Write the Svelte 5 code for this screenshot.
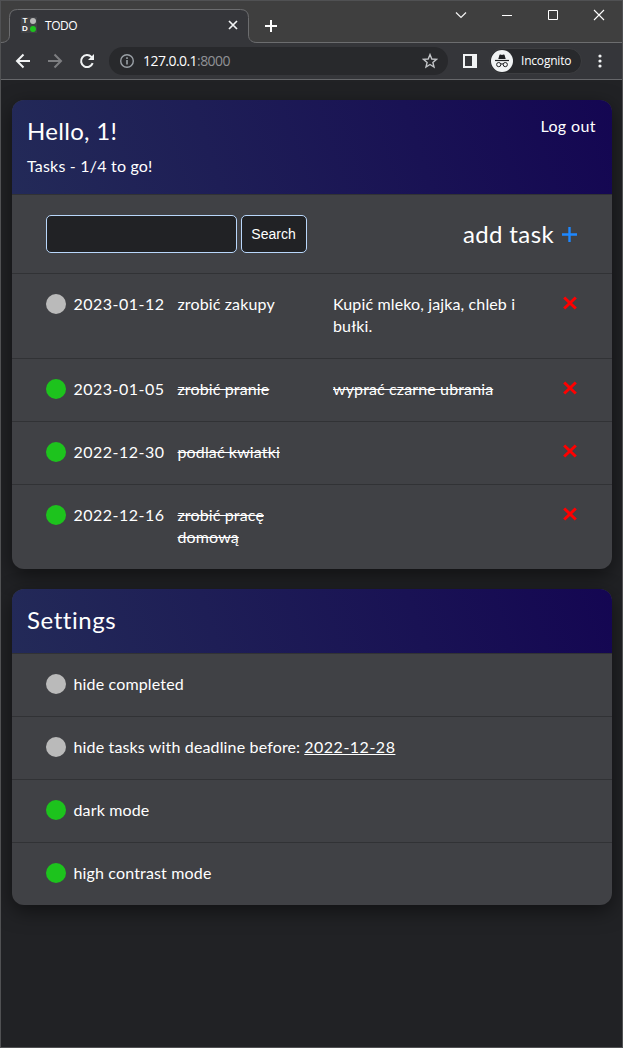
<script>
  const tasks = [
    { done: false, date: '2023-01-12', title: 'zrobić zakupy', text: 'Kupić mleko, jajka, chleb i bułki.' },
    { done: true, date: '2023-01-05', title: 'zrobić pranie', text: 'wyprać czarne ubrania' },
    { done: true, date: '2022-12-30', title: 'podlać kwiatki', text: '' },
    { done: true, date: '2022-12-16', title: 'zrobić pracę domową', text: '' }
  ];
  const settings = [
    { on: false, label: 'hide completed' },
    { on: false, label: 'hide tasks with deadline before:', date: '2022-12-28' },
    { on: true, label: 'dark mode' },
    { on: true, label: 'high contrast mode' }
  ];
</script>

<div class="window">
  <div class="titlebar">
    <div class="tab">
      <svg class="tabshape" width="258" height="34" viewBox="0 0 258 34">
        <path d="M0 33.5C5 33.5 8.5 31 8.500 26V8.500Q8.500 .5 16.500 .5H239.500Q247.500 .5 247.500 8.500V26C247.500 31 251 33.500 256 33.500H258V34H0Z" fill="#35363a" />
        <path d="M0 33.500C5 33.500 8.500 31 8.500 26V8.500Q8.500 .5 16.500 .5H239.500Q247.500 .5 247.500 8.500V26C247.500 31 251 33.500 256 33.500H258" fill="none" stroke="#6c6d6f" />
      </svg>
      <div class="tabrow">
        <div class="favicon"><b>T</b><i class="grey"></i><b>D</b><i class="green"></i></div>
        <span class="tabname">TODO</span>
        <svg width="10" height="10" viewBox="0 0 10 10"><path d="M1 1L9 9M9 1L1 9" stroke="#f1f3f4" stroke-width="1.7" fill="none" /></svg>
      </div>
    </div>
    <svg class="newtab" width="12" height="12" viewBox="0 0 12 12"><path d="M6 0V12M0 6H12" stroke="#fff" stroke-width="2" /></svg>
    <div class="controls">
      <svg width="12" height="12" viewBox="0 0 12 12"><path d="M1 3.500L6 8.500L11 3.500" fill="none" stroke="#f4f4f4" stroke-width="1.200" /></svg>
      <svg width="12" height="12" viewBox="0 0 12 12"><path d="M1 6.500H11" stroke="#fff" /></svg>
      <svg width="12" height="12" viewBox="0 0 12 12"><path d="M1.500 1.500H10.500V10.500H1.500Z" fill="none" stroke="#fff" /></svg>
      <svg width="12" height="12" viewBox="0 0 12 12"><path d="M1 1L11 11M11 1L1 11" stroke="#fff" stroke-width="1.100" /></svg>
    </div>
  </div>

  <div class="toolbar">
    <svg width="16" height="16" viewBox="0 0 16 16"><path d="M8.500 1.500L2 8L8.500 14.500M2 8H15" fill="none" stroke="#f1f3f4" stroke-width="2" /></svg>
    <svg width="16" height="16" viewBox="0 0 16 16"><path d="M7.500 1.500L14 8L7.500 14.500M14 8H1" fill="none" stroke="#7d7e81" stroke-width="2" /></svg>
    <svg width="16" height="16" viewBox="0 0 16 16"><path d="M13.700 10.200A6 6 0 1 1 12.400 3.900L14 5.500" fill="none" stroke="#f1f3f4" stroke-width="2" /><path d="M15 1V7H9Z" fill="#f1f3f4" /></svg>
    <div class="omnibox">
      <svg width="16" height="16" viewBox="0 0 16 16"><circle cx="8" cy="8" r="6.300" fill="none" stroke="#9aa0a6" stroke-width="1.400" /><path d="M8 7V11.500M8 4.300V5.900" stroke="#9aa0a6" stroke-width="1.600" /></svg>
      <span class="url">127.0.0.1<em>:8000</em></span>
      <svg width="16" height="16" viewBox="0 0 16 16"><path d="M8 1.600L9.800 6L14.500 6.300L10.900 9.400L12 14L8 11.500L4 14L5.100 9.400L1.500 6.300L6.200 6Z" fill="none" stroke="#c3c5c8" stroke-width="1.400" /></svg>
    </div>
    <svg class="panel" width="14" height="14" viewBox="0 0 14 14"><path d="M0 0H14V14H0ZM2 2V12H9V2Z" fill="#f1f3f4" fill-rule="evenodd" /></svg>
    <div class="incognito">
      <svg width="22" height="22" viewBox="0 0 22 22">
        <circle cx="11" cy="11" r="11" fill="#f1f3f4" />
        <path d="M7.300 9L8.500 4.800L9.600 4.400L11 4.900L12.400 4.400L13.500 4.800L14.700 9Z" fill="#202124" />
        <path d="M4 10.500H18" stroke="#202124" stroke-width="1.200" />
        <circle cx="7.700" cy="14.600" r="2.100" fill="none" stroke="#202124" /><circle cx="14.300" cy="14.600" r="2.100" fill="none" stroke="#202124" />
        <path d="M9.800 14.200Q11 13.300 12.200 14.200" fill="none" stroke="#202124" />
      </svg>
      <span>Incognito</span>
    </div>
    <svg class="menu" width="4" height="14" viewBox="0 0 4 14"><circle cx="2" cy="2" r="1.600" fill="#f1f3f4" /><circle cx="2" cy="7" r="1.600" fill="#f1f3f4" /><circle cx="2" cy="12" r="1.600" fill="#f1f3f4" /></svg>
  </div>

  <main>
    <section>
      <header class="hello">
        <div>
          <h1>Hello, 1!</h1>
          <p>Tasks - 1/4 to go!</p>
        </div>
        <span class="logout">Log out</span>
      </header>
      <div class="row search">
        <input type="text" aria-label="Search tasks" />
        <button>Search</button>
        <span class="add">add task</span>
        <svg width="15" height="15" viewBox="0 0 15 15"><path d="M7.500 0V15M0 7.500H15" stroke="#1e88ff" stroke-width="2.400" /></svg>
      </div>
      {#each tasks as task}
        <div class="row task" class:done={task.done}>
          <i class="dot"></i>
          <span class="date">{task.date}</span>
          <span class="title">{task.title}</span>
          <span class="desc">{task.text}</span>
          <svg width="16" height="16" viewBox="0 0 16 16"><path d="M2.200 2.500L13.800 13.500M13.800 2.500L2.200 13.500" stroke="#f00" stroke-width="3" /></svg>
        </div>
      {/each}
    </section>

    <section>
      <header class="settings"><h1>Settings</h1></header>
      {#each settings as item}
        <div class="row setting" class:done={item.on}>
          <i class="dot"></i>
          <span class="label">{item.label}</span>
          {#if item.date}<u>{item.date}</u>{/if}
        </div>
      {/each}
    </section>
  </main>
</div>

<style>
  :global(body) { background: #202124; }
  .window {
    box-sizing: border-box; height: 1048px; width: 623px; overflow: hidden;
    border: 1px solid #505153; background: #212225; color: #fff;
    font: 16px/22px Lato, sans-serif; letter-spacing: .13px; display: flex; flex-direction: column;
  }
  svg { display: block; flex: none; }
  .titlebar { height: 42px; flex: none; background: #3f3f3f; display: flex; box-shadow: inset 0 -1px #6c6d6f; }
  .tab { display: grid; margin-top: 8px; width: 258px; height: 34px; }
  .tabshape, .tabrow { grid-area: 1 / 1; }
  .tabrow { display: flex; align-items: center; height: 34px; padding: 0 21px 2px 20px; box-sizing: border-box; }
  .tabrow svg { margin-left: auto; }
  .favicon { width: 16px; height: 16px; background: #414246; display: grid; grid-template-columns: 8px 8px; grid-template-rows: 8px 8px; place-items: center; }
  .favicon b { font: bold 8px/8px "Liberation Sans", sans-serif; letter-spacing: 0; }
  .favicon i { width: 6px; height: 6px; border-radius: 50%; }
  .grey { background: #b8b8b8; }
  .green { background: #1dc31d; }
  .tabname { font: 12px/16px "Open Sans", sans-serif; margin: 1px 0 0 8px; letter-spacing: -.45px; }
  .newtab { margin: 19px 0 0 6px; }
  .controls { display: flex; gap: 34px; margin: 8px 17px 0 auto; }
  .toolbar { height: 37px; box-sizing: border-box; flex: none; background: #35363a; border-bottom: 1px solid #66676a; display: flex; align-items: center; padding: 0 20px 0 14px; }
  .toolbar > svg + svg:not(.panel) { margin-left: 16px; }
  .omnibox { width: 339px; height: 28px; box-sizing: border-box; border-radius: 14px; background: #28292c; margin-left: 14px; padding: 0 10px; display: flex; align-items: center; }
  .url { flex: 1; margin-left: 8px; font: 14px/20px "Open Sans", sans-serif; letter-spacing: -.56px; }
  .url em { font-style: normal; color: #909296; }
  .toolbar .panel { margin-left: 15px; }
  .incognito { margin-left: 12px; width: 93px; height: 26px; box-sizing: border-box; border: 1px solid #3c3d40; border-radius: 14px; background: #28292c; display: flex; align-items: center; padding-left: 1px; }
  .incognito span { margin-left: 8px; font: 12px/16px "Open Sans", sans-serif; letter-spacing: -.2px; }
  .toolbar .menu { margin-left: auto; }
  main { padding: 20px 10px 0 11px; display: flex; flex-direction: column; gap: 20px; }
  section { border-radius: 12px; background: #404145; box-shadow: 0 6px 20px rgba(0, 0, 0, .5); overflow: hidden; }
  header { box-sizing: border-box; display: flex; justify-content: space-between; padding: 15px 16px 0 15px; background: linear-gradient(72deg, #232a58, #140652); }
  .hello { height: 94px; }
  .settings { height: 64px; }
  h1 { font-weight: 400; font-size: 24px; line-height: 32px; margin: 0; letter-spacing: .3px; }
  .settings h1 { letter-spacing: .55px; }
  p { margin: 8px 0 0; line-height: 22px; letter-spacing: .2px; }
  .logout { line-height: 22px; letter-spacing: .4px; }
  .row { border-top: 1px solid #313235; padding: 19px 34px 21px; display: flex; align-items: flex-start; }
  .search { height: 38px; align-items: center; padding: 20px 34px; }
  input, button { box-sizing: border-box; height: 38px; border: 1px solid #b9d7fb; border-radius: 5px; background: #212225; color: #fff; margin: 0; }
  input { width: 191px; }
  button { width: 66px; margin-left: 4px; padding: 0 1px 0 0; font: 14px "Liberation Sans", sans-serif; }
  .add { margin-left: auto; font-size: 24px; line-height: 32px; letter-spacing: .38px; }
  .search svg { margin-left: 8px; margin-right: 1px; }
  .dot { width: 20px; height: 20px; border-radius: 50%; background: #bababa; flex: none; margin: 1px 7.500px 0 0; }
  .done .dot { background: #1dc31d; }
  .date { width: 104px; flex: none; letter-spacing: .5px; }
  .title { width: 130px; flex: none; }
  .desc { width: 200px; margin-left: 25.500px; flex: none; }
  .task.done .title, .task.done .desc { text-decoration: line-through; }
  .task svg { margin: 2px 0 0 auto; }
  .label { letter-spacing: .15px; }
  u { margin-left: 4px; letter-spacing: .5px; }
</style>
